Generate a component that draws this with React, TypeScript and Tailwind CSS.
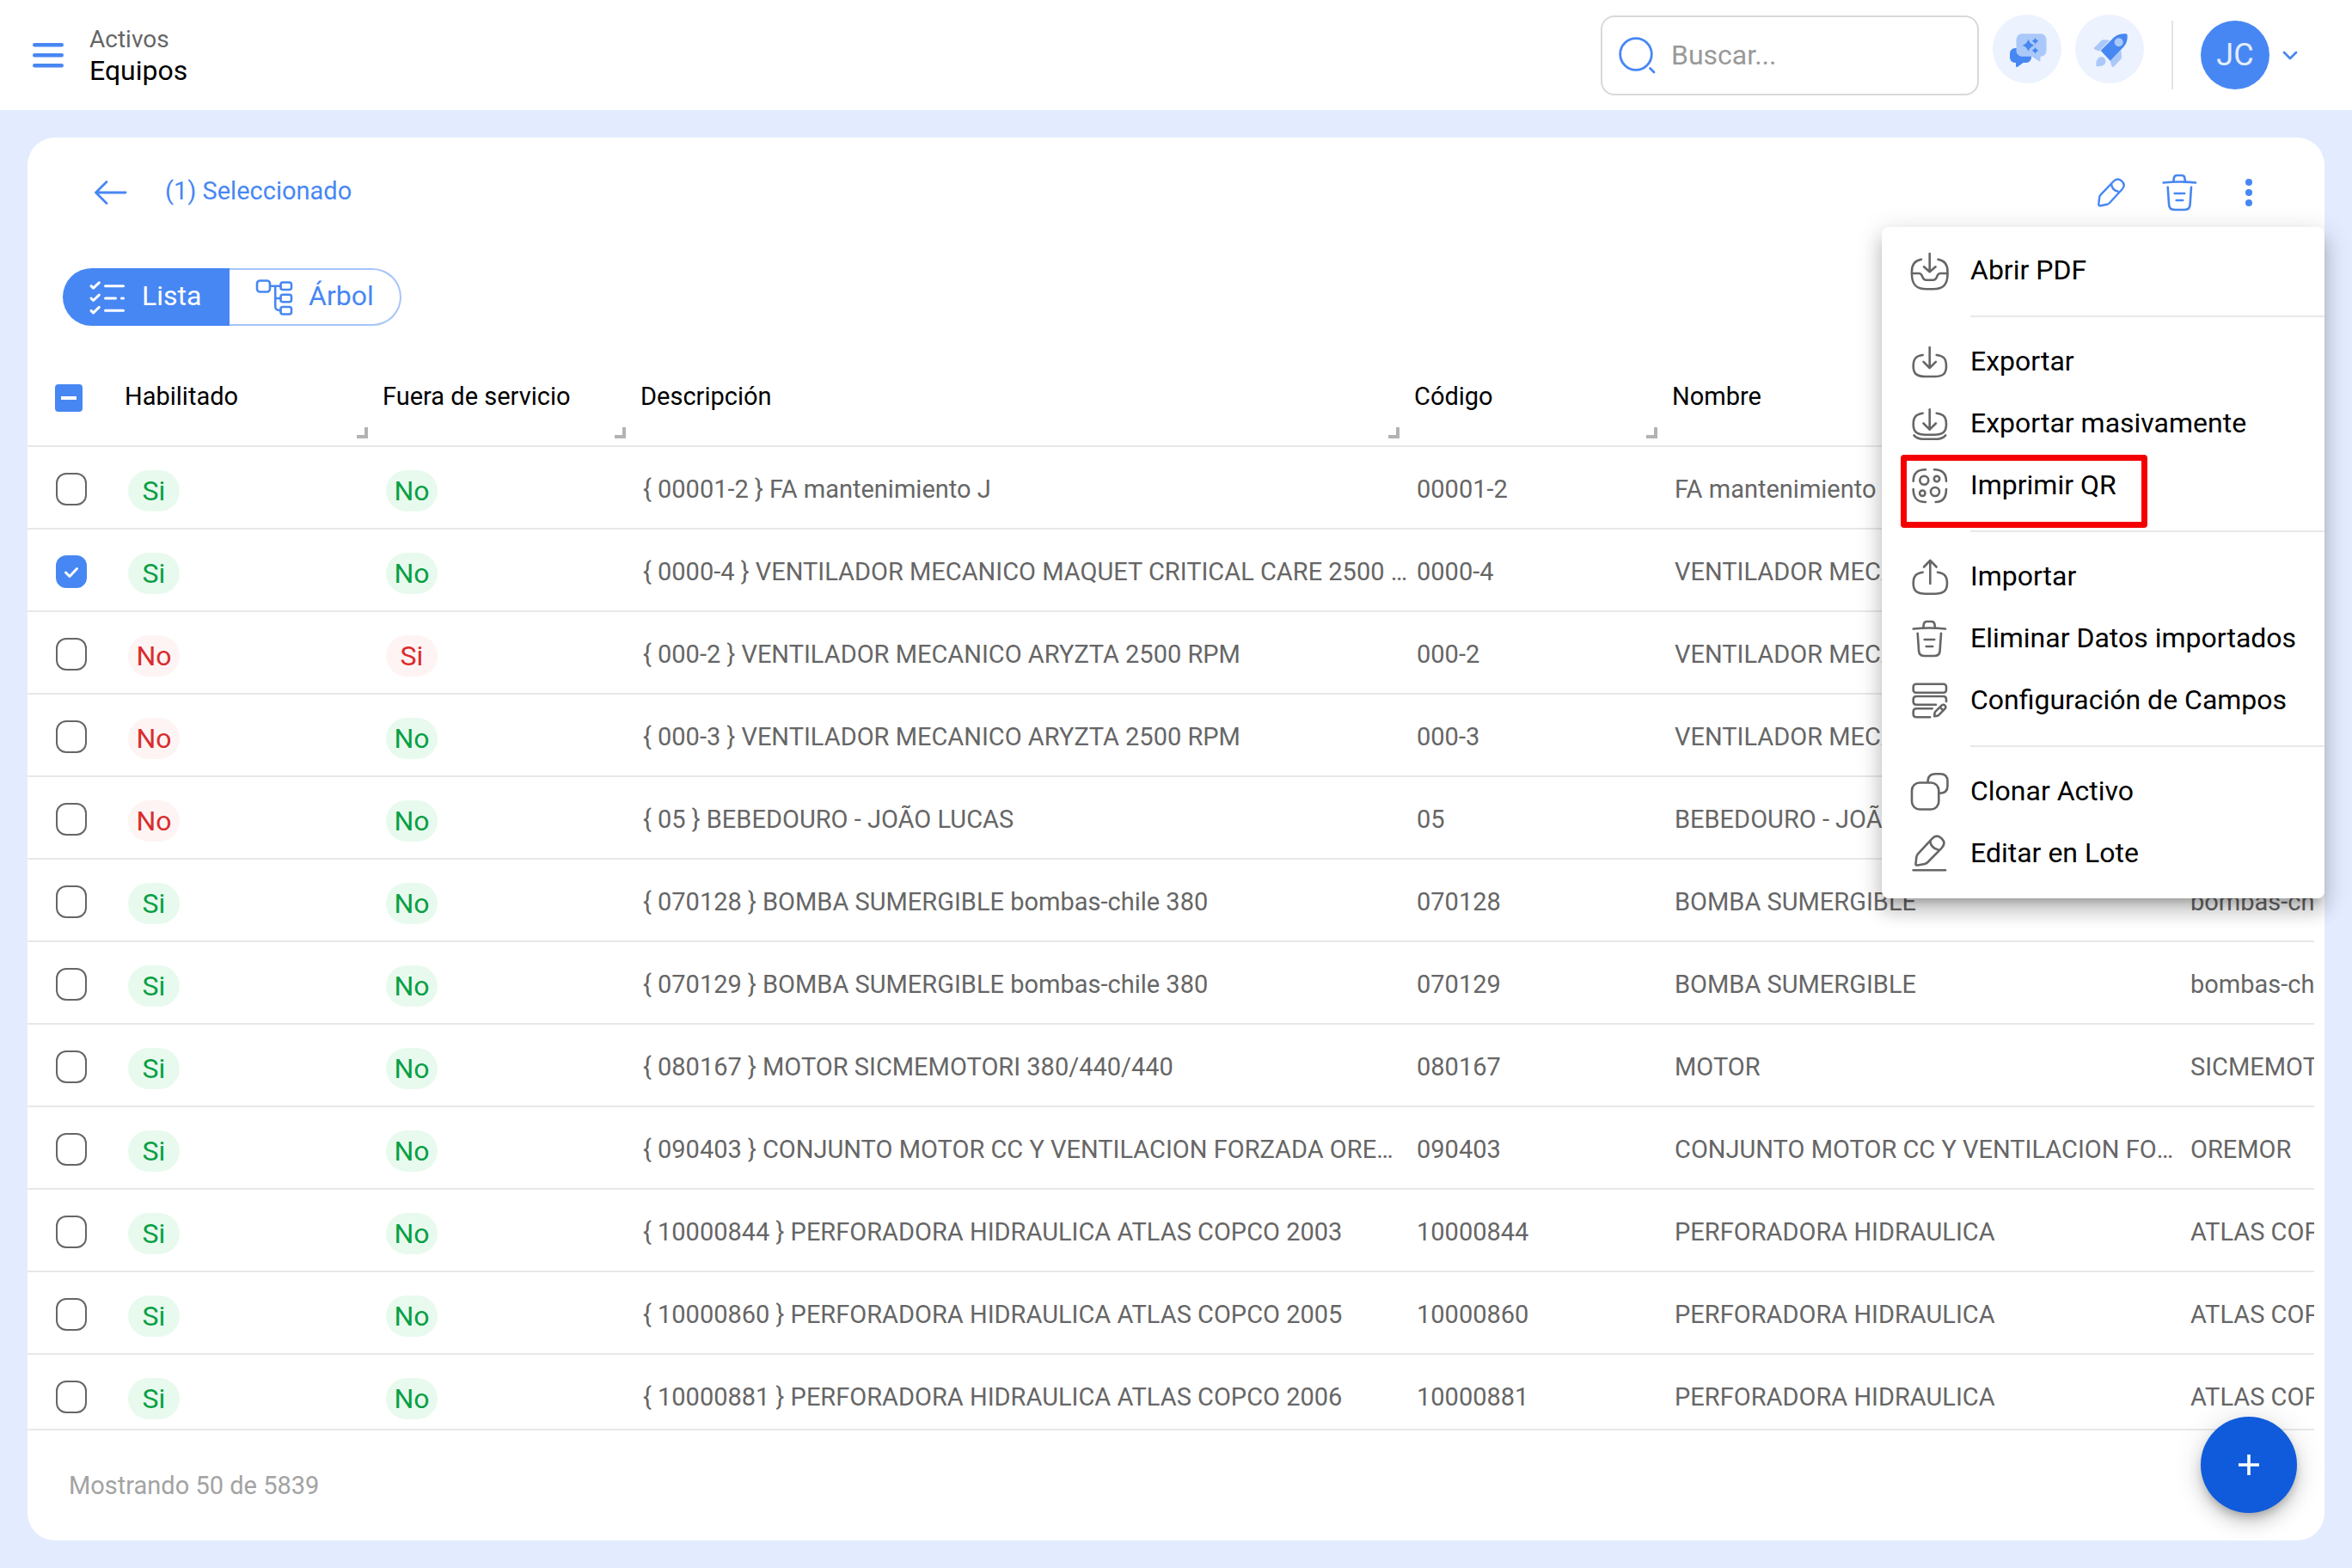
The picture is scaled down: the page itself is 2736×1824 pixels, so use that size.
import React from "react";

type IconProps = { className?: string };

function Stroke({ className = "size-12 shrink-0", children }: { className?: string; children: React.ReactNode }) {
  return (
    <svg
      viewBox="0 0 48 48"
      className={className}
      fill="none"
      stroke="currentColor"
      strokeWidth={2.6}
      strokeLinecap="round"
      strokeLinejoin="round"
      aria-hidden="true"
    >
      {children}
    </svg>
  );
}

function InboxIcon() {
  return (
    <Stroke>
      <path d="M15 10.7C7.5 12 4 16 4 24.5V28C4 40 9 45.3 21 45.3h7.5C40.5 45.3 45.5 40 45.5 28v-3.5C45.5 16 42 12 34.5 10.7" />
      <path d="M24.7 4v21.3M18 19.3l6.7 6 6.9-6" />
      <path d="M4 27h8c1.8 0 2.900 1 3.500 2.200l1.500 3.200c.8 1.600 2 2.300 3.600 2.300h8.200c1.600 0 2.800-.7 3.600-2.300l1.500-3.200c.6-1.200 1.700-2.200 3.500-2.200h8" />
    </Stroke>
  );
}

function ExportIcon() {
  return (
    <Stroke>
      <path d="M16.7 16C9 17 5.7 20 5.7 29 5.7 38 10 41 20 41h10c10 0 14-3 14-12 0-9-3-12-11.3-13" />
      <path d="M24.7 7v24M17.5 23.8l7.2 7.2 7.2-7.2" />
    </Stroke>
  );
}

function ExportBulkIcon() {
  return (
    <Stroke>
      <path d="M16.7 11.7C9 12.7 5.7 16 5.7 24.5 5.7 33.5 10 36.7 20 36.7h10c10 0 14-3.2 14-12.2 0-8.5-3-11.8-11.3-12.8" />
      <path d="M24.7 7.3v23.4M17.5 23.5l7.2 7.2 7.2-7.2" />
      <path d="M6.5 37.4c2.5 3 6 4.3 10 4.3h16.7c4 0 7.500-1.300 10-4.300" />
    </Stroke>
  );
}

function QrIcon() {
  return (
    <Stroke>
      <path d="M5.7 18.7C5.7 10 9.5 5.3 20 5.3M30 5.3c9.5 0 14 4.7 14 13.4M5.7 28C5.7 38 9.5 43 20 43M31.7 43C40 43 44 38 44 28" />
      <circle cx="18.3" cy="17.7" r="5" />
      <circle cx="33" cy="16" r="3.2" />
      <circle cx="31" cy="31" r="5" />
      <circle cx="16.3" cy="32.7" r="3.2" />
    </Stroke>
  );
}

function ImportIcon() {
  return (
    <Stroke>
      <path d="M16.7 18.7C9 19.7 5.7 23 5.7 31.5 5.7 40.5 10 43.7 20 43.7h10.500c10 0 14.500-3.200 14.500-12.200 0-8.500-3.300-11.800-11-12.800" />
      <path d="M25.3 5v27M18 12.5l7.3-7.5 7.3 7.5" />
    </Stroke>
  );
}

function TrashIcon({ className }: IconProps) {
  return (
    <Stroke className={className}>
      <path d="M5.7 12.5c12.5-1.3 25-1.3 37.3 0" />
      <path d="M17.3 11.3l.6-4.3c.3-2 1.6-3 3.6-3h5.3c2 0 3.3 1 3.6 3l.6 4.3" />
      <path d="M10.7 17.7l1.4 20.5c.3 4.2 2 5.8 6.2 5.8h12.1c4.2 0 5.9-1.6 6.2-5.8L38 17.7" />
      <path d="M18.7 25h11.5M20.7 33h7.5" />
    </Stroke>
  );
}

function FieldsIcon() {
  return (
    <Stroke>
      <rect x="5.7" y="4.7" width="38.3" height="10" rx="3" />
      <path d="M44 25v-2.5c0-2.3-1.2-3.5-3.5-3.5H9.2c-2.3 0-3.5 1.2-3.5 3.5v2.7c0 2.3 1.2 3.5 3.5 3.5H32" />
      <path d="M27.7 33.2H9.2c-2.3 0-3.5 1.2-3.5 3.5v3c0 2.3 1.2 3.5 3.5 3.5h16" />
      <path d="M30.2 42.3l.3-3.6c.1-.8.4-1.5 1-2l7-7c1.5-1.4 2.8-1.3 4 0 1.2 1.2 1.2 2.6-.2 4l-6.8 7c-.5.5-1.2.9-2 1zM36.7 31.7l3.6 3.7" />
    </Stroke>
  );
}

function CloneIcon() {
  return (
    <Stroke>
      <rect x="4" y="13.5" width="31.3" height="31" rx="9" />
      <path d="M22.5 12.7C22.5 6 25.5 3.2 31.5 3.2h5.3c5.8 0 8.7 2.8 8.7 8.6v5.4c0 5.6-3 8.5-9.5 8.5" />
    </Stroke>
  );
}

function PencilLineIcon() {
  return (
    <Stroke>
      <path d="M5.7 43.3H43" />
      <path d="M8.5 36.2l.8-8c.2-1.6.8-2.8 1.9-4L27.5 6.7c3.5-3.7 7.4-3.8 11-.5 3.7 3.5 3.8 7.4.3 11.2L22.4 34c-1 1-2 1.6-3.4 1.9l-8.3 1.6c-1.5.2-2.3-.2-2.2-1.3z" />
      <path d="M25.2 9.5c.8 5.2 3.8 8.7 9.4 10" />
    </Stroke>
  );
}

function PencilIcon() {
  return (
    <svg viewBox="0 0 36 36" className="size-9" fill="none" stroke="currentColor" strokeWidth={2.4} strokeLinejoin="round" aria-hidden="true">
      <path d="M3.3 31.3l.9-7.8c.2-1.3.7-2.2 1.6-3.1L20.5 5c3.2-3.2 6.7-3.3 9.7-.4 3.2 3 3.2 6.5.1 9.9L16 30c-.9 1-1.7 1.5-3 1.8l-7.2 1.4c-1.7.3-2.700-.4-2.500-1.900z" />
      <path d="M18 8c.5 4.6 3.6 8 8.7 9" />
    </svg>
  );
}

function Sparkle({ x, y, r }: { x: number; y: number; r: number }) {
  const k = r * 0.25;
  return (
    <path
      fill="#4787f3"
      d={`M${x} ${y - r}Q${x + k} ${y - k} ${x + r} ${y}Q${x + k} ${y + k} ${x} ${y + r}Q${x - k} ${y + k} ${x - r} ${y}Q${x - k} ${y - k} ${x} ${y - r}Z`}
    />
  );
}

function ChatIcon() {
  return (
    <svg viewBox="0 0 80 80" className="size-20" aria-hidden="true">
      <path fill="#4787f3" d="M26 39h13a6 6 0 0 1 6 6v5a6 6 0 0 1-6 6h-3.500l-6.500 4.700c-1 .6-2 .2-2-1V56h-1a6 6 0 0 1-6-6v-5a6 6 0 0 1 6-6z" />
      <path fill="#aac8f9" d="M34 22.300h22a6.500 6.500 0 0 1 6.500 6.500v13.400a6.500 6.500 0 0 1-6.500 6.500h-.5V53c0 1.200-.8 1.500-1.800 1l-8.200-5.300H34a6.500 6.500 0 0 1-6.500-6.500V28.800a6.500 6.500 0 0 1 6.500-6.500z" />
      <Sparkle x={41.5} y={35.7} r={7} />
      <Sparkle x={49.5} y={30.7} r={3.8} />
      <Sparkle x={49.5} y={41.7} r={3.8} />
    </svg>
  );
}

function RocketIcon() {
  return (
    <svg viewBox="0 0 80 80" className="size-20" aria-hidden="true">
      <path fill="#aac8f9" d="M22.5 38l8-7.7c1-.9 2-1.2 3.3-1.1l6.5.6L28 42.500l-4.800-1.800c-1.300-.5-1.700-1.600-.7-2.700z" />
      <path fill="#aac8f9" d="M53.3 41l.7 8c.1 1.400-.3 2.300-1.200 3.200l-7.600 8c-1.200 1.200-2.400 1-2.900-.5l-1.800-6z" />
      <path fill="#aac8f9" d="M24.5 60c-.7-3.200.3-7 2-9 2-2.200 5.500-2.300 7.500-.3s2 5.300-.2 7.400c-2 1.800-5.800 2.500-9.300 1.900z" />
      <path fill="#4787f3" d="M29.7 41.700L45 26.500c4.500-4 9.500-4.700 14-4.200 1 .1 1.500.6 1.600 1.500.4 4.700-.4 9.400-4.200 13.700L40.700 53.700z" />
      <circle cx="50.7" cy="32.3" r="5" fill="#aac8f9" />
    </svg>
  );
}

type Row = { on: boolean; out?: boolean; checked?: boolean; desc: string; code: string; name: string; brand: string };

const rows: Row[] = [
  { on: true, desc: "{ 00001-2 } FA mantenimiento J", code: "00001-2", name: "FA mantenimiento", brand: "" },
  { on: true, checked: true, desc: "{ 0000-4 } VENTILADOR MECANICO MAQUET CRITICAL CARE 2500 RPM", code: "0000-4", name: "VENTILADOR MECANICO", brand: "MAQUET" },
  { on: false, out: true, desc: "{ 000-2 } VENTILADOR MECANICO ARYZTA 2500 RPM", code: "000-2", name: "VENTILADOR MECANICO", brand: "ARYZTA" },
  { on: false, desc: "{ 000-3 } VENTILADOR MECANICO ARYZTA 2500 RPM", code: "000-3", name: "VENTILADOR MECANICO", brand: "ARYZTA" },
  { on: false, desc: "{ 05 } BEBEDOURO - JOÃO LUCAS", code: "05", name: "BEBEDOURO - JOÃO LUCAS", brand: "" },
  { on: true, desc: "{ 070128 } BOMBA SUMERGIBLE bombas-chile 380", code: "070128", name: "BOMBA SUMERGIBLE", brand: "bombas-chile" },
  { on: true, desc: "{ 070129 } BOMBA SUMERGIBLE bombas-chile 380", code: "070129", name: "BOMBA SUMERGIBLE", brand: "bombas-chile" },
  { on: true, desc: "{ 080167 } MOTOR SICMEMOTORI 380/440/440", code: "080167", name: "MOTOR", brand: "SICMEMOTORI" },
  { on: true, desc: "{ 090403 } CONJUNTO MOTOR CC Y VENTILACION FORZADA OREMOR", code: "090403", name: "CONJUNTO MOTOR CC Y VENTILACION FORZADA", brand: "OREMOR" },
  { on: true, desc: "{ 10000844 } PERFORADORA HIDRAULICA ATLAS COPCO 2003", code: "10000844", name: "PERFORADORA HIDRAULICA", brand: "ATLAS COPCO" },
  { on: true, desc: "{ 10000860 } PERFORADORA HIDRAULICA ATLAS COPCO 2005", code: "10000860", name: "PERFORADORA HIDRAULICA", brand: "ATLAS COPCO" },
  { on: true, desc: "{ 10000881 } PERFORADORA HIDRAULICA ATLAS COPCO 2006", code: "10000881", name: "PERFORADORA HIDRAULICA", brand: "ATLAS COPCO" },
];

function Chip({ yes, good }: { yes: boolean; good: boolean }) {
  return (
    <span
      className={
        "flex h-12 w-[60px] items-center justify-center rounded-full text-[32px] leading-12 " +
        (good ? "bg-[#e8faee] text-[#0a9f45]" : "bg-[#fef4f4] text-[#d92d2d]")
      }
    >
      {yes ? "Si" : "No"}
    </span>
  );
}

function HeadCell({ label, handle = true }: { label: string; handle?: boolean }) {
  return (
    <th scope="col" className="relative h-[112px] border-b-2 border-[#e8e8e8] pb-1 pl-[17px] text-left align-middle font-normal text-black">
      {label}
      {handle && <span className="absolute right-0 bottom-2 size-[13px] border-r-4 border-b-4 border-[#b3b3b3]" />}
    </th>
  );
}

function TextCell({ children }: { children: string }) {
  return (
    <td className="border-b-2 border-[#e8e8e8] pt-1 pl-5">
      <div className="-mr-2.5 truncate">{children}</div>
    </td>
  );
}

const menuGroups = [
  [{ label: "Abrir PDF", icon: <InboxIcon /> }],
  [
    { label: "Exportar", icon: <ExportIcon /> },
    { label: "Exportar masivamente", icon: <ExportBulkIcon /> },
    { label: "Imprimir QR", icon: <QrIcon />, marked: true },
  ],
  [
    { label: "Importar", icon: <ImportIcon /> },
    { label: "Eliminar Datos importados", icon: <TrashIcon /> },
    { label: "Configuración de Campos", icon: <FieldsIcon /> },
  ],
  [
    { label: "Clonar Activo", icon: <CloneIcon /> },
    { label: "Editar en Lote", icon: <PencilLineIcon /> },
  ],
] as { label: string; icon: React.ReactNode; marked?: boolean }[][];

function ActionsMenu() {
  return (
    <div
      role="menu"
      className="absolute top-[104px] right-0 z-10 w-[515px] rounded-lg bg-white pt-[15px] pb-4 shadow-[0_10px_10px_-6px_rgba(0,0,0,0.2),0_16px_20px_2px_rgba(0,0,0,0.14),0_6px_28px_4px_rgba(0,0,0,0.12)]"
    >
      {menuGroups.map((group, i) => (
        <div key={group[0].label} role="group">
          {i > 0 && <hr className="my-4 ml-[103px] border-t-2 border-[#e8e8e8]" />}
          {group.map((item) => (
            <button
              key={item.label}
              role="menuitem"
              type="button"
              className="relative flex h-[72px] w-full items-center gap-6 pl-[31px] text-left text-[32px] leading-10 whitespace-nowrap text-black"
            >
              <span className="text-[#666]">{item.icon}</span>
              <span className="pb-0.5">{item.label}</span>
              {item.marked && <span className="absolute top-0 left-[22px] h-[85px] w-[287px] rounded border-[7px] border-[#f40000]" />}
            </button>
          ))}
        </div>
      ))}
    </div>
  );
}

function Header() {
  return (
    <header className="flex h-32 shrink-0 items-center bg-white pr-[62px] pl-8">
      <button type="button" aria-label="Menú" className="text-[#4787f3]">
        <Stroke className="size-12">
          <path strokeWidth={4.4} d="M8.2 12.2h31.600M8.200 24.200h31.600M8.200 36.200h31.600" />
        </Stroke>
      </button>
      <div className="ml-6">
        <p className="text-[28px] leading-9 text-[#666]">Activos</p>
        <h1 className="text-[32px] leading-9 text-black">Equipos</h1>
      </div>
      <label className="ml-auto flex h-[93px] w-[440px] items-center gap-[18px] rounded-2xl border-2 border-[#d9d9d9] pl-[18px]">
        <svg viewBox="0 0 44 44" className="size-11 shrink-0 text-[#4787f3]" fill="none" stroke="currentColor" strokeWidth={2.8} strokeLinecap="round" aria-hidden="true">
          <circle cx="21" cy="21" r="18.3" />
          <path d="M37.5 37.5l4.500 4.500" />
        </svg>
        <input
          type="search"
          aria-label="Buscar"
          placeholder="Buscar..."
          className="w-full min-w-0 bg-transparent text-[32px] leading-10 outline-none placeholder:text-[#999]"
        />
      </label>
      <div className="ml-4 flex gap-4 pb-3.5">
        <button type="button" aria-label="Asistente" className="rounded-full bg-[#ecf2fe]">
          <ChatIcon />
        </button>
        <button type="button" aria-label="Novedades" className="rounded-full bg-[#ecf2fe]">
          <RocketIcon />
        </button>
      </div>
      <div className="mx-8 h-20 w-0.5 bg-[#e4e4e4]" />
      <button type="button" aria-label="Cuenta" className="flex items-center gap-3.5 text-[#4787f3]">
        <span className="flex size-20 items-center justify-center rounded-full bg-[#4787f3] text-[36px] leading-10 text-[#e3ecfe]">JC</span>
        <svg viewBox="0 0 20 20" className="size-5" fill="none" stroke="currentColor" strokeWidth={2.8} strokeLinecap="round" strokeLinejoin="round" aria-hidden="true">
          <path d="M3 7l7 7 7-7" />
        </svg>
      </button>
    </header>
  );
}

export default function App() {
  return (
    <div className="flex h-screen flex-col overflow-hidden bg-[#e3ecfe] font-['Roboto',sans-serif] text-[29px] leading-9 text-[#666]">
      <Header />
      <main className="flex min-h-0 flex-1 p-8">
        <section className="relative flex min-w-0 flex-1 flex-col rounded-[32px] bg-white">
          <div className="flex h-32 shrink-0 items-center pr-16 pl-[76px] text-[#4787f3]">
            <button type="button" aria-label="Volver">
              <svg viewBox="0 0 42 42" className="size-[42px]" fill="none" stroke="currentColor" strokeWidth={2.8} strokeLinecap="round" strokeLinejoin="round" aria-hidden="true">
                <path d="M38 21H3.5M16 8.5L3.5 21 16 33.5" />
              </svg>
            </button>
            <span className="ml-[42px] pb-1">(1) Seleccionado</span>
            <div className="ml-auto flex items-center">
              <button type="button" aria-label="Editar">
                <PencilIcon />
              </button>
              <button type="button" aria-label="Eliminar" className="ml-[37px]">
                <TrashIcon className="size-12" />
              </button>
              <button type="button" aria-label="Más acciones" className="ml-[33px]">
                <svg viewBox="0 0 48 48" className="size-12" fill="currentColor" aria-hidden="true">
                  <circle cx="24" cy="12" r="4" />
                  <circle cx="24" cy="24" r="4" />
                  <circle cx="24" cy="36" r="4" />
                </svg>
              </button>
            </div>
          </div>

          <div className="mt-6 ml-[41px] flex h-[67px] shrink-0 text-[32px] leading-10">
            <button type="button" aria-pressed="true" className="flex w-[194px] items-center gap-4 rounded-l-full bg-[#4787f3] pl-7 text-white">
              <Stroke className="size-12">
                <path strokeWidth={3} d="M21.5 10.7h21M21.5 25h12M40.5 25h2M21.5 39.300h21" />
                <path strokeWidth={3} d="M5 10.7l2.600 2.500 6.700-6.400M5 25l2.600 2.500 6.700-6.400M5 39.300l2.600 2.500 6.700-6.400" />
              </Stroke>
              <span className="pb-1">Lista</span>
            </button>
            <button type="button" aria-pressed="false" className="flex w-[200px] items-center gap-4 rounded-r-full border-2 border-l-0 border-[#a6c5f9] pl-7 text-[#4787f3]">
              <Stroke className="size-12">
                <rect x="4" y="4.5" width="15" height="13" rx="3.5" />
                <rect x="31.5" y="6.5" width="12.5" height="8.5" rx="2.5" />
                <rect x="31.5" y="20.7" width="12.5" height="8.5" rx="2.5" />
                <rect x="31.5" y="35" width="12.5" height="8.5" rx="2.5" />
                <path d="M19 10.8h12.500M25.200 10.800V34c0 4 1.500 5.200 6.300 5.200M25.200 25h6.300" />
              </Stroke>
              <span className="pb-1">Árbol</span>
            </button>
          </div>

          <div className="mt-[29px] mr-3 min-h-0 flex-1 overflow-hidden border-b-2 border-[#e8e8e8]">
            <table className="w-full table-fixed border-separate border-spacing-0 whitespace-nowrap">
              <colgroup>
                <col className="w-24" />
                <col className="w-[300px]" />
                <col className="w-[300px]" />
                <col className="w-[900px]" />
                <col className="w-[300px]" />
                <col className="w-[600px]" />
                <col />
              </colgroup>
              <thead>
                <tr>
                  <th className="border-b-2 border-[#e8e8e8] pl-8 text-left">
                    <label className="relative block size-8">
                      <input type="checkbox" aria-label="Seleccionar todo" defaultChecked className="block size-8 appearance-none rounded bg-[#4787f3]" />
                      <span className="absolute top-3.5 left-[7px] h-1 w-[18px] bg-white" />
                    </label>
                  </th>
                  <HeadCell label="Habilitado" />
                  <HeadCell label="Fuera de servicio" />
                  <HeadCell label="Descripción" />
                  <HeadCell label="Código" />
                  <HeadCell label="Nombre" />
                  <HeadCell label="Marca" handle={false} />
                </tr>
              </thead>
              <tbody>
                {rows.map((r) => (
                  <tr key={r.code} className="h-24">
                    <td className="border-b-2 border-[#e8e8e8] pt-1 pl-[33px]">
                      <label className="relative block h-[38px] w-9">
                        <input
                          type="checkbox"
                          aria-label={r.desc}
                          defaultChecked={r.checked}
                          className="block h-[38px] w-9 appearance-none rounded-xl border-2 border-[#666] bg-white checked:border-[#4787f3] checked:bg-[#4787f3]"
                        />
                        {r.checked && (
                          <svg viewBox="0 0 36 38" className="absolute inset-0 text-white" fill="none" stroke="currentColor" strokeWidth={3} strokeLinecap="round" strokeLinejoin="round" aria-hidden="true">
                            <path d="M11.5 20l4.500 4.500 8.500-9" />
                          </svg>
                        )}
                      </label>
                    </td>
                    <td className="border-b-2 border-[#e8e8e8] pt-2 pl-[21px]">
                      <Chip yes={r.on} good={r.on} />
                    </td>
                    <td className="border-b-2 border-[#e8e8e8] pt-2 pl-[21px]">
                      <Chip yes={!!r.out} good={!r.out} />
                    </td>
                    <TextCell>{r.desc}</TextCell>
                    <TextCell>{r.code}</TextCell>
                    <TextCell>{r.name}</TextCell>
                    <td className="overflow-hidden border-b-2 border-[#e8e8e8] pt-1 pl-5">{r.brand}</td>
                  </tr>
                ))}
              </tbody>
            </table>
          </div>

          <footer className="flex h-32 shrink-0 items-center pl-12 text-[#a3a3a3]">Mostrando 50 de 5839</footer>

          <ActionsMenu />

          <button
            type="button"
            aria-label="Agregar"
            className="absolute right-8 bottom-8 flex size-28 items-center justify-center rounded-full bg-[#0f5bdb] text-white shadow-[0_6px_10px_-2px_rgba(0,0,0,0.2),0_12px_20px_0_rgba(0,0,0,0.14),0_2px_36px_0_rgba(0,0,0,0.12)]"
          >
            <svg viewBox="0 0 24 24" className="size-6" stroke="currentColor" strokeWidth={3.6} aria-hidden="true">
              <path d="M12 0v24M0 12h24" />
            </svg>
          </button>
        </section>
      </main>
    </div>
  );
}
